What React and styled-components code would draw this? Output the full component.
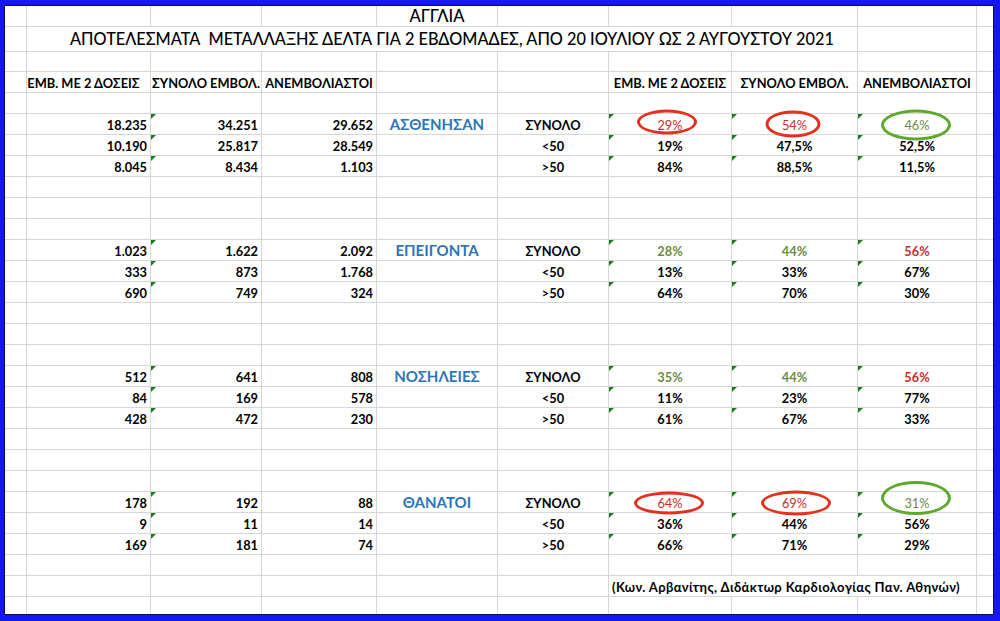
import React from "react";
import styled, { createGlobalStyle } from "styled-components";

const GlobalStyle = createGlobalStyle`
  html, body { margin: 0; padding: 0; background: #fff; }
  body { font-family: "Lato", "Open Sans", "Noto Sans", sans-serif; }
`;

const COLS = [22, 124, 111, 115, 121, 111, 123, 126, 119, 16];
const ROW_H = [21, 25, 20, 21, 21, ...Array(23).fill(21), 17];

const Frame = styled.div`
  width: 1000px;
  height: 621px;
  box-sizing: border-box;
  background: #1616f0;
  padding: 5px 6px 6px 4px;
`;

const Sheet = styled.div`
  height: 100%;
  box-sizing: border-box;
  border: 1px solid #0b0b4e;
  background: #fff;
  display: grid;
  grid-template-columns: ${COLS.map((w) => `${w}px`).join(" ")};
  grid-template-rows: ${ROW_H.map((h) => `${h}px`).join(" ")};
  overflow: hidden;
  color: #000;
`;

const justify = { left: "flex-start", center: "center", right: "flex-end" };

const Cell = styled.div`
  position: relative;
  box-sizing: border-box;
  min-width: 0;
  grid-column: span ${(p) => p.$span};
  border-right: ${(p) => (p.$noRight ? "none" : "1px solid #d6d6d6")};
  border-bottom: ${(p) => (p.$noBottom ? "none" : "1px solid #d6d6d6")};
  display: flex;
  align-items: flex-end;
  justify-content: ${(p) => justify[p.$align]};
  padding: 0 ${(p) => p.$padR}px ${(p) => p.$padB}px ${(p) => p.$padL}px;
  white-space: nowrap;
`;

const Flag = styled.span`
  position: absolute;
  left: 0;
  top: 0;
  width: 0;
  height: 0;
  border-top: 5px solid #1f7a1f;
  border-right: 5px solid transparent;
`;

const ovalColor = { red: "#e4301c", green: "#5ea82e" };

const Oval = styled.span`
  position: absolute;
  left: calc(50% + ${(p) => p.$dx}px);
  top: calc(50% + ${(p) => p.$dy}px);
  width: ${(p) => p.$w}px;
  height: ${(p) => p.$h}px;
  transform: translate(-50%, -50%);
  box-sizing: border-box;
  border: 3px solid ${(p) => ovalColor[p.$color]};
  border-radius: 50%;
  z-index: 2;
  pointer-events: none;
`;

const Country = styled.span`
  font-size: 16.5px;
  font-weight: 500;
  line-height: 18px;
`;

const Title = styled.span`
  font-size: 16.3px;
  font-weight: 500;
  line-height: 20px;
  margin-bottom: 1px;
`;

const Header = styled.span`
  font-size: 12.8px;
  font-weight: 700;
  line-height: 15px;
`;

const Value = styled.span`
  font-size: 12.8px;
  font-weight: 700;
  line-height: 15px;
`;

const Category = styled.span`
  font-size: 15px;
  font-weight: 700;
  line-height: 18px;
  color: #2e75b6;
`;

const toneColor = { red: "#c8302c", green: "#6b8c46", plain: "#000" };

const Percent = styled.span`
  font-size: 12.8px;
  font-weight: ${(p) => (p.$circled ? 400 : 700)};
  line-height: 15px;
  color: ${(p) => toneColor[p.$tone]};
`;

const Note = styled.span`
  font-size: 13px;
  font-weight: 700;
  letter-spacing: 0.38px;
  line-height: 15px;
`;

const TITLE =
  "ΑΠΟΤΕΛΕΣΜΑΤΑ\u00a0\u00a0ΜΕΤΑΛΛΑΞΗΣ ΔΕΛΤΑ ΓΙΑ 2 ΕΒΔΟΜΑΔΕΣ, ΑΠΟ 20 ΙΟΥΛΙΟΥ ΩΣ 2 ΑΥΓΟΥΣΤΟΥ 2021";
const NOTE = "(Κων. Αρβανίτης, Διδάκτωρ Καρδιολογίας Παν. Αθηνών)";
const HEADS = ["ΕΜΒ. ΜΕ 2 ΔΟΣΕΙΣ", "ΣΥΝΟΛΟ ΕΜΒΟΛ.", "ΑΝΕΜΒΟΛΙΑΣΤΟΙ"];
const AGES = ["ΣΥΝΟΛΟ", "<50", ">50"];

const GROUPS = [
  {
    start: 5,
    label: "ΑΣΘΕΝΗΣΑΝ",
    counts: [
      ["18.235", "10.190", "8.045"],
      ["34.251", "25.817", "8.434"],
      ["29.652", "28.549", "1.103"],
    ],
    pcts: [
      ["29%", "19%", "84%"],
      ["54%", "47,5%", "88,5%"],
      ["46%", "52,5%", "11,5%"],
    ],
    tones: ["red", "red", "green"],
    ovals: [
      { w: 60, h: 25, dx: -3.5, dy: -2.5 },
      { w: 55, h: 27, dx: -2, dy: -0.5 },
      { w: 70, h: 31, dx: -1, dy: 0.5 },
    ],
  },
  {
    start: 11,
    label: "ΕΠΕΙΓΟΝΤΑ",
    counts: [
      ["1.023", "333", "690"],
      ["1.622", "873", "749"],
      ["2.092", "1.768", "324"],
    ],
    pcts: [
      ["28%", "13%", "64%"],
      ["44%", "33%", "70%"],
      ["56%", "67%", "30%"],
    ],
    tones: ["green", "green", "red"],
  },
  {
    start: 17,
    label: "ΝΟΣΗΛΕΙΕΣ",
    counts: [
      ["512", "84", "428"],
      ["641", "169", "472"],
      ["808", "578", "230"],
    ],
    pcts: [
      ["35%", "11%", "61%"],
      ["44%", "23%", "67%"],
      ["56%", "77%", "33%"],
    ],
    tones: ["green", "green", "red"],
  },
  {
    start: 23,
    label: "ΘΑΝΑΤΟΙ",
    counts: [
      ["178", "9", "169"],
      ["192", "11", "181"],
      ["88", "14", "74"],
    ],
    pcts: [
      ["64%", "36%", "66%"],
      ["69%", "44%", "71%"],
      ["31%", "56%", "29%"],
    ],
    tones: ["red", "red", "green"],
    ovals: [
      { w: 70, h: 23, dx: -1, dy: 0.5 },
      { w: 70, h: 25, dx: 1.5, dy: 0.5 },
      { w: 70, h: 34, dx: -1, dy: -4.5 },
    ],
  },
];

function buildRows() {
  const rows = ROW_H.map(() => ({}));
  rows[0][4] = { align: "center", node: <Country>ΑΓΓΛΙΑ</Country> };
  rows[1][1] = { span: 7, align: "left", padL: 43, node: <Title>{TITLE}</Title> };
  HEADS.forEach((h, i) => {
    rows[3][1 + i] = {
      align: "center",
      padR: i === 0 ? 13 : 3,
      node: <Header>{h}</Header>,
    };
    rows[3][6 + i] = { align: "center", node: <Header>{h}</Header> };
  });
  GROUPS.forEach((g) => {
    for (let k = 0; k < 3; k++) {
      const r = g.start + k;
      g.counts.forEach((col, ci) => {
        rows[r][1 + ci] = {
          align: "right",
          flag: ci === 1,
          node: <Value>{col[k]}</Value>,
        };
      });
      if (k === 0) {
        rows[r][4] = { align: "center", node: <Category>{g.label}</Category> };
      }
      rows[r][5] = { align: "center", node: <Value>{AGES[k]}</Value> };
      g.pcts.forEach((col, ci) => {
        const tone = k === 0 ? g.tones[ci] : "plain";
        const oval = k === 0 && g.ovals ? g.ovals[ci] : null;
        rows[r][6 + ci] = {
          align: "center",
          flag: true,
          oval: oval ? { ...oval, color: g.tones[ci] } : null,
          node: (
            <Percent $tone={tone} $circled={!!oval}>
              {col[k]}
            </Percent>
          ),
        };
      });
    }
  });
  rows[27][6] = { span: 3, align: "left", node: <Note>{NOTE}</Note> };
  return rows;
}

const ROWS = buildRows();

export default function App() {
  const cells = [];
  ROWS.forEach((row, r) => {
    let c = 0;
    while (c < COLS.length) {
      const spec = row[c] || {};
      const span = spec.span || 1;
      const key = `${r}-${c}`;
      cells.push(
        <Cell
          key={key}
          $span={span}
          $align={spec.align || "left"}
          $padL={spec.padL ?? 3}
          $padR={spec.padR ?? 3}
          $padB={1}
          $noRight={c + span - 1 === COLS.length - 1}
          $noBottom={r === ROWS.length - 1}
        >
          {spec.flag && <Flag />}
          {spec.node}
          {spec.oval && (
            <Oval
              $w={spec.oval.w}
              $h={spec.oval.h}
              $dx={spec.oval.dx}
              $dy={spec.oval.dy}
              $color={spec.oval.color}
            />
          )}
        </Cell>
      );
      c += span;
    }
  });

  return (
    <>
      <GlobalStyle />
      <Frame>
        <Sheet>{cells}</Sheet>
      </Frame>
    </>
  );
}
